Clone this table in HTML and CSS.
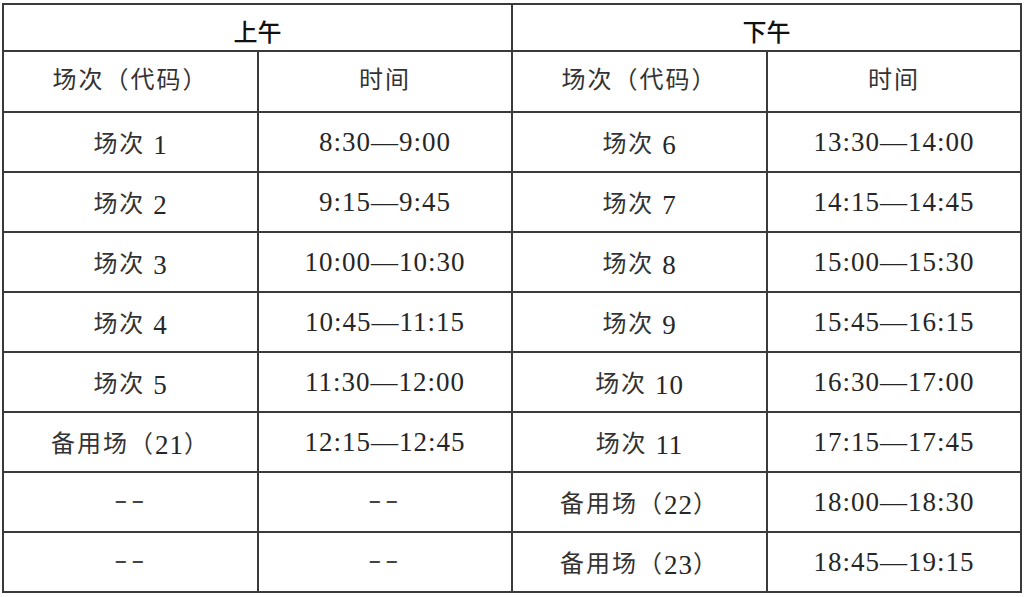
FILE: index.html
```html
<!DOCTYPE html>
<html lang="zh-CN">
<head>
<meta charset="utf-8">
<title>场次时间表</title>
<link rel="stylesheet" href="styles.css">
</head>
<body>
<table class="schedule">
  <colgroup>
    <col class="c1"><col class="c2"><col class="c3"><col class="c4">
  </colgroup>
  <tr class="r-period">
    <th colspan="2">上午</th>
    <th colspan="2">下午</th>
  </tr>
  <tr class="r-head">
    <td><span class="zh">场次（代码）</span></td><td><span class="zh">时间</span></td>
    <td><span class="zh">场次（代码）</span></td><td><span class="zh">时间</span></td>
  </tr>
  <tr><td><span class="zh">场次</span> 1</td><td>8:30—9:00</td><td><span class="zh">场次</span> 6</td><td>13:30—14:00</td></tr>
  <tr><td><span class="zh">场次</span> 2</td><td>9:15—9:45</td><td><span class="zh">场次</span> 7</td><td>14:15—14:45</td></tr>
  <tr><td><span class="zh">场次</span> 3</td><td>10:00—10:30</td><td><span class="zh">场次</span> 8</td><td>15:00—15:30</td></tr>
  <tr><td><span class="zh">场次</span> 4</td><td>10:45—11:15</td><td><span class="zh">场次</span> 9</td><td>15:45—16:15</td></tr>
  <tr><td><span class="zh">场次</span> 5</td><td>11:30—12:00</td><td><span class="zh">场次</span> 10</td><td>16:30—17:00</td></tr>
  <tr><td><span class="zh">备用场（</span>21<span class="zh">）</span></td><td>12:15—12:45</td><td><span class="zh">场次</span> 11</td><td>17:15—17:45</td></tr>
  <tr><td><span class="none">--</span></td><td><span class="none">--</span></td><td><span class="zh">备用场（</span>22<span class="zh">）</span></td><td>18:00—18:30</td></tr>
  <tr><td><span class="none">--</span></td><td><span class="none">--</span></td><td><span class="zh">备用场（</span>23<span class="zh">）</span></td><td>18:45—19:15</td></tr>
</table>
</body>
</html>
```
FILE: styles.css
```css
html, body {
  margin: 0;
  padding: 0;
  background: #ffffff;
}
body {
  padding: 3px 0 0 2px;
}
.schedule {
  border-collapse: collapse;
  table-layout: fixed;
  width: 1020px;
  font-family: "Liberation Serif", "Noto Sans CJK SC", serif;
  font-size: 27px;
  color: #262626;
}
.c1 { width: 255px; }
.c2 { width: 254px; }
.c3 { width: 255px; }
.c4 { width: 254px; }
.schedule th,
.schedule td {
  border: 2px solid #3a3a3a;
  text-align: center;
  vertical-align: middle;
  padding: 0;
  white-space: nowrap;
  letter-spacing: 1px;
}
.schedule tr { height: 60px; }
.schedule tr.r-period { height: 47px; }
.schedule tr.r-head { height: 61px; }
.r-period th {
  font-family: "Noto Sans CJK SC", sans-serif;
  font-weight: 500;
  font-size: 24px;
  color: #111;
  letter-spacing: 0;
  padding-top: 6px;
}
.r-head td {
  padding-bottom: 6px;
}
.zh {
  font-family: "Noto Sans CJK SC", sans-serif;
  font-size: 24px;
  font-weight: 400;
  color: #333;
  letter-spacing: 2px;
  vertical-align: 2px;
}
.none {
  display: inline-block;
  font-family: "Liberation Sans", sans-serif;
  font-size: 24px;
  letter-spacing: 2px;
  color: #444;
  transform: scaleX(1.7);
  vertical-align: 4px;
}
```
